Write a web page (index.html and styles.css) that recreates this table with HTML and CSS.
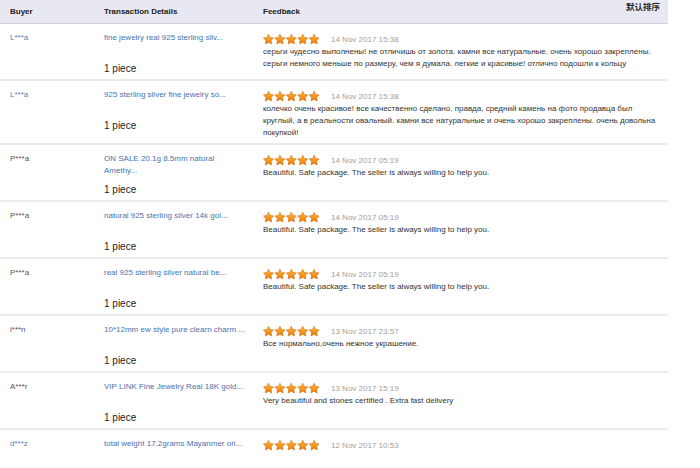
FILE: index.html
```html
<!DOCTYPE html>
<html>
<head>
<meta charset="utf-8">
<link rel="stylesheet" href="styles.css">
</head>
<body>
<svg class="defs" width="0" height="0" aria-hidden="true">
  <defs>
    <linearGradient id="sg" x1="0" y1="0" x2="0" y2="1">
      <stop offset="0" stop-color="#ffbc4a"/>
      <stop offset="1" stop-color="#ec7a00"/>
    </linearGradient>
    <symbol id="star" viewBox="0 0 11 11">
      <polygon points="5.5,0.3 7.06,3.46 10.54,3.96 8.02,6.42 8.62,9.89 5.5,8.25 2.38,9.89 2.98,6.42 0.46,3.96 3.94,3.46" fill="url(#sg)" stroke="#d46a00" stroke-width="0.6" stroke-linejoin="round"/>
    </symbol>
  </defs>
</svg>

<div class="table">
  <div class="head">
    <div class="h first">Buyer</div>
    <div class="h">Transaction Details</div>
    <div class="h">Feedback</div>
    <div class="sort">默认排序</div>
  </div>

  <div class="row">
    <div class="buyer blue">L***a</div>
    <div class="tx"><a class="link" href="#">fine jewelry real 925 sterling silv...</a><div class="qty">1 piece</div></div>
    <div class="fb">
      <div class="meta"><svg class="stars" viewBox="0 0 57 11"><use href="#star" x="0" width="11" height="11"/><use href="#star" x="11.4" width="11" height="11"/><use href="#star" x="22.8" width="11" height="11"/><use href="#star" x="34.2" width="11" height="11"/><use href="#star" x="45.6" width="11" height="11"/></svg><span class="date">14 Nov 2017 15:38</span></div>
      <p class="text">серьги чудесно выполнены! не отличишь от золота. камни все натуральные. очень хорошо закреплены.<br>серьги немного меньше по размеру, чем я думала. легкие и красивые! отлично подошли к кольцу</p>
    </div>
  </div>

  <div class="row">
    <div class="buyer blue">L***a</div>
    <div class="tx"><a class="link" href="#">925 sterling silver fine jewelry so...</a><div class="qty">1 piece</div></div>
    <div class="fb">
      <div class="meta"><svg class="stars" viewBox="0 0 57 11"><use href="#star" x="0" width="11" height="11"/><use href="#star" x="11.4" width="11" height="11"/><use href="#star" x="22.8" width="11" height="11"/><use href="#star" x="34.2" width="11" height="11"/><use href="#star" x="45.6" width="11" height="11"/></svg><span class="date">14 Nov 2017 15:38</span></div>
      <p class="text">колечко очень красивое! все качественно сделано. правда, средний камень на фото продавца был<br>круглый, а в реальности овальный. камни все натуральные и очень хорошо закреплены. очень довольна<br>покупкой!</p>
    </div>
  </div>

  <div class="row">
    <div class="buyer">P***a</div>
    <div class="tx"><a class="link" href="#">ON SALE 20.1g 8.5mm natural<br>Amethy...</a><div class="qty">1 piece</div></div>
    <div class="fb">
      <div class="meta"><svg class="stars" viewBox="0 0 57 11"><use href="#star" x="0" width="11" height="11"/><use href="#star" x="11.4" width="11" height="11"/><use href="#star" x="22.8" width="11" height="11"/><use href="#star" x="34.2" width="11" height="11"/><use href="#star" x="45.6" width="11" height="11"/></svg><span class="date">14 Nov 2017 05:19</span></div>
      <p class="text">Beautiful. Safe package. The seller is always willing to help you.</p>
    </div>
  </div>

  <div class="row">
    <div class="buyer">P***a</div>
    <div class="tx"><a class="link" href="#">natural 925 sterling silver 14k gol...</a><div class="qty">1 piece</div></div>
    <div class="fb">
      <div class="meta"><svg class="stars" viewBox="0 0 57 11"><use href="#star" x="0" width="11" height="11"/><use href="#star" x="11.4" width="11" height="11"/><use href="#star" x="22.8" width="11" height="11"/><use href="#star" x="34.2" width="11" height="11"/><use href="#star" x="45.6" width="11" height="11"/></svg><span class="date">14 Nov 2017 05:19</span></div>
      <p class="text">Beautiful. Safe package. The seller is always willing to help you.</p>
    </div>
  </div>

  <div class="row">
    <div class="buyer">P***a</div>
    <div class="tx"><a class="link" href="#">real 925 sterling silver natural be...</a><div class="qty">1 piece</div></div>
    <div class="fb">
      <div class="meta"><svg class="stars" viewBox="0 0 57 11"><use href="#star" x="0" width="11" height="11"/><use href="#star" x="11.4" width="11" height="11"/><use href="#star" x="22.8" width="11" height="11"/><use href="#star" x="34.2" width="11" height="11"/><use href="#star" x="45.6" width="11" height="11"/></svg><span class="date">14 Nov 2017 05:19</span></div>
      <p class="text">Beautiful. Safe package. The seller is always willing to help you.</p>
    </div>
  </div>

  <div class="row">
    <div class="buyer">i***n</div>
    <div class="tx"><a class="link" href="#">10*12mm ew style pure clearn charm ...</a><div class="qty">1 piece</div></div>
    <div class="fb">
      <div class="meta"><svg class="stars" viewBox="0 0 57 11"><use href="#star" x="0" width="11" height="11"/><use href="#star" x="11.4" width="11" height="11"/><use href="#star" x="22.8" width="11" height="11"/><use href="#star" x="34.2" width="11" height="11"/><use href="#star" x="45.6" width="11" height="11"/></svg><span class="date">13 Nov 2017 23:57</span></div>
      <p class="text">Все нормально,очень нежное украшение.</p>
    </div>
  </div>

  <div class="row">
    <div class="buyer">A***r</div>
    <div class="tx"><a class="link" href="#">VIP LINK Fine Jewelry Real 18K gold...</a><div class="qty">1 piece</div></div>
    <div class="fb">
      <div class="meta"><svg class="stars" viewBox="0 0 57 11"><use href="#star" x="0" width="11" height="11"/><use href="#star" x="11.4" width="11" height="11"/><use href="#star" x="22.8" width="11" height="11"/><use href="#star" x="34.2" width="11" height="11"/><use href="#star" x="45.6" width="11" height="11"/></svg><span class="date">13 Nov 2017 15:19</span></div>
      <p class="text">Very beautiful and stones certified . Extra fast delivery</p>
    </div>
  </div>

  <div class="row">
    <div class="buyer blue">d***z</div>
    <div class="tx"><a class="link" href="#">total weight 17.2grams Mayanmer ori...</a><div class="qty">1 piece</div></div>
    <div class="fb">
      <div class="meta"><svg class="stars" viewBox="0 0 57 11"><use href="#star" x="0" width="11" height="11"/><use href="#star" x="11.4" width="11" height="11"/><use href="#star" x="22.8" width="11" height="11"/><use href="#star" x="34.2" width="11" height="11"/><use href="#star" x="45.6" width="11" height="11"/></svg><span class="date">12 Nov 2017 10:53</span></div>
      <p class="text"></p>
    </div>
  </div>
</div>
</body>
</html>
```

FILE: styles.css
```css
html, body {
  margin: 0;
  padding: 0;
  background: #ffffff;
}

body {
  font-family: "Liberation Sans", Arial, "Noto Sans CJK SC", sans-serif;
  color: #333333;
  overflow: hidden;
}

.defs {
  position: absolute;
  width: 0;
  height: 0;
}

.table {
  width: 668px;
}

.head {
  display: grid;
  grid-template-columns: 104px 159px 1fr auto;
  height: 23px;
  background: #e8e8f2;
  border-bottom: 1px solid #d2d2de;
  align-items: center;
  font-size: 8px;
  font-weight: bold;
  color: #222222;
}

.head .first {
  padding-left: 10px;
}

.sort {
  align-self: start;
  padding-top: 2px;
  padding-right: 8px;
  font-size: 8.5px;
  line-height: 10px;
  color: #2a2a2a;
}

.row {
  display: grid;
  grid-template-columns: 104px 159px 1fr;
  padding: 8px 0 4px;
  border-bottom: 2px solid #ececec;
}

.buyer {
  padding-left: 10px;
  font-size: 8px;
  line-height: 12px;
  color: #555555;
}

.buyer.blue {
  color: #5b7db8;
}

.link {
  display: block;
  height: 24px;
  font-size: 8px;
  line-height: 12px;
  color: #4a72ad;
  text-decoration: none;
}

.qty {
  margin-top: 6px;
  font-size: 10px;
  line-height: 13px;
  color: #222222;
}

.meta {
  display: flex;
  align-items: center;
  gap: 11px;
  height: 14px;
}

.stars {
  width: 57px;
  height: 11px;
  display: block;
}

.date {
  font-size: 8px;
  color: #a0a0a0;
}

.text {
  margin: 0;
  font-size: 8px;
  line-height: 12px;
  color: #333333;
  white-space: nowrap;
}
```
